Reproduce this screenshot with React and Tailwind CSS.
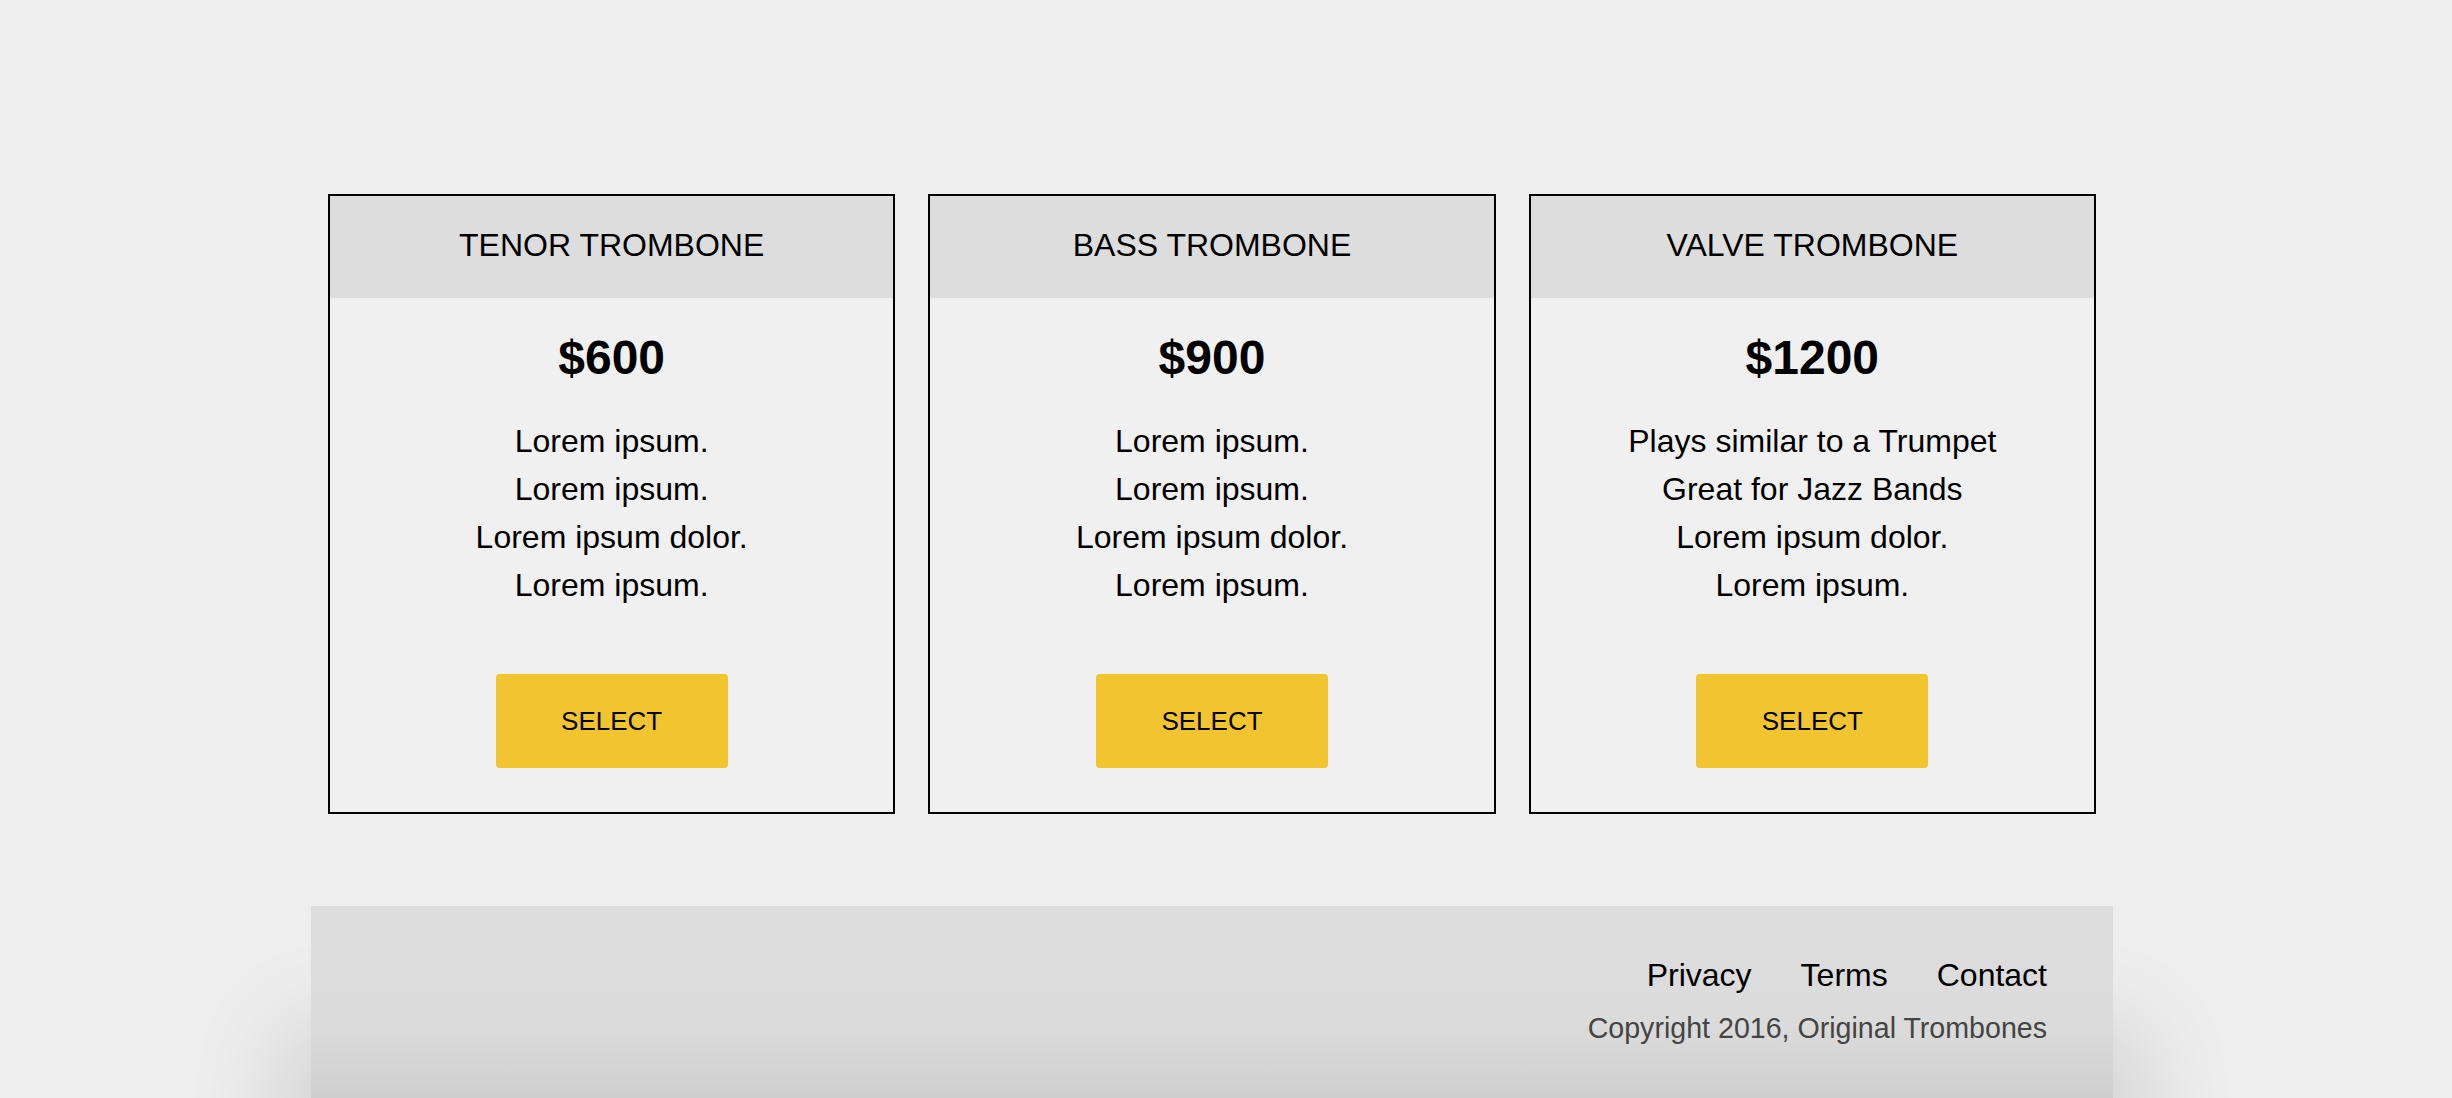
import React from "react";

const plans = [
  {
    name: "TENOR TROMBONE",
    price: "$600",
    features: ["Lorem ipsum.", "Lorem ipsum.", "Lorem ipsum dolor.", "Lorem ipsum."],
  },
  {
    name: "BASS TROMBONE",
    price: "$900",
    features: ["Lorem ipsum.", "Lorem ipsum.", "Lorem ipsum dolor.", "Lorem ipsum."],
  },
  {
    name: "VALVE TROMBONE",
    price: "$1200",
    features: [
      "Plays similar to a Trumpet",
      "Great for Jazz Bands",
      "Lorem ipsum dolor.",
      "Lorem ipsum.",
    ],
  },
];

function PlanCard({ plan }) {
  return (
    <div className="flex-1 border-2 border-black bg-[#f0f0f0] text-center">
      <h3 className="bg-[#dddddd] pt-[25px] pb-[29px] text-[32px] leading-[48px] font-normal">
        {plan.name}
      </h3>
      <div className="pt-[24px] text-[48px] leading-[72px] font-bold">{plan.price}</div>
      <ul className="mt-[23px] text-[32px] leading-[48px]">
        {plan.features.map((f, i) => (
          <li key={i}>{f}</li>
        ))}
      </ul>
      <div className="flex justify-center pt-[65px] pb-[44px]">
        <button className="flex h-[94px] w-[232px] items-center justify-center rounded-[4px] bg-[#f1c430] text-[26px] leading-[39px] text-black">
          SELECT
        </button>
      </div>
    </div>
  );
}

export default function App() {
  return (
    <div
      className="h-[1098px] overflow-hidden bg-[#eeeeee] pr-[28px] text-black"
      style={{ fontFamily: '"Liberation Sans", Arial, Helvetica, sans-serif' }}
    >
      <div className="mx-auto w-[1802px]">
        {/* Pricing cards */}
        <section className="flex gap-[33px] px-[17px] pt-[194px]">
          {plans.map((p) => (
            <PlanCard key={p.name} plan={p} />
          ))}
        </section>

        {/* Footer */}
        <footer className="mt-[92px] h-[240px] bg-gradient-to-b from-[#dddddd] via-[#dbdbdb] to-[#c6c6c6] pr-[66px] pt-[45px] text-right shadow-[0_150px_90px_30px_rgba(0,0,0,0.12)]">
          <nav className="flex justify-end gap-[49px] text-[32px] leading-[48px]">
            <a href="#">Privacy</a>
            <a href="#">Terms</a>
            <a href="#">Contact</a>
          </nav>
          <p className="mt-[8px] text-[28.6px] leading-[42px] text-[#444444]">
            Copyright 2016, Original Trombones
          </p>
        </footer>
      </div>
    </div>
  );
}
